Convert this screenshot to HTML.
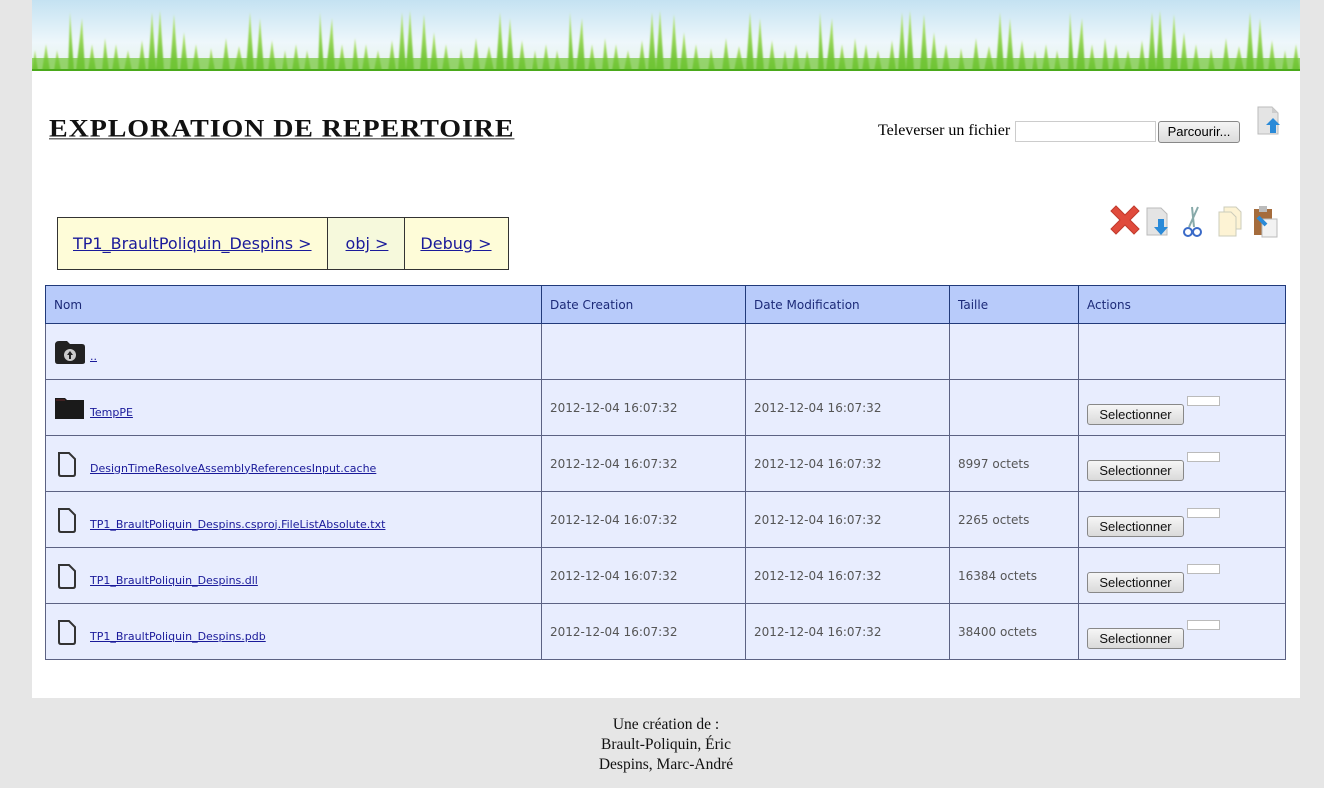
<!DOCTYPE html>
<html><head><meta charset="utf-8"><style>
body{margin:0;background:#e6e6e6;width:1324px;height:788px;overflow:hidden;font-family:"Liberation Serif",serif}
#wrap{position:absolute;left:32px;top:0;width:1268px;height:698px;background:#fff}
#banner{position:absolute;left:0;top:0;width:1268px;height:71px}
h1{position:absolute;left:17px;top:115px;margin:0;font-family:"Liberation Serif",serif;font-weight:bold;font-size:28px;letter-spacing:0.9px;transform:scaleY(0.9);transform-origin:left top;text-decoration:underline;text-decoration-thickness:1px;text-underline-offset:2px;color:#111}
.up{position:absolute;left:846px;top:122px;font-size:16px}
.up input{position:absolute;left:137px;top:-1px;width:141px;height:21px;border:1px solid #ccc;box-sizing:border-box}
.up .b{position:absolute;left:280px;top:-1px;width:82px;height:22px;border:1px solid #888;border-radius:3px;background:linear-gradient(#f4f4f4,#dcdcdc);font-family:"Liberation Sans",sans-serif;font-size:13px;text-align:center;line-height:20px;box-sizing:border-box}
.bc{position:absolute;left:25px;top:217px;height:51px;border:1px solid #333;display:flex;font-family:"DejaVu Sans",sans-serif;font-size:16px}
.bc div{background:#fefcd8;border-right:1px solid #333;padding:0 15px;line-height:52px}
.bc div:last-child{border-right:0;padding-right:16px}
.bc a{color:#1a1a9a;text-decoration:underline}
table{position:absolute;left:13px;top:285px;border-collapse:collapse;font-family:"DejaVu Sans",sans-serif;font-size:12px;color:#555}
th{background:#b8cbfa;color:#1c2a78;font-weight:normal;text-align:left;height:37px;padding:0 8px;border:1px solid #213a7a}
td{background:#e8edfe;border:1px solid #5c6283;height:55px;padding:0 8px;vertical-align:middle}
td a{color:#1a1a9a;font-size:11px;text-decoration:underline;margin-left:4px}
.btn{display:inline-block;margin-top:14px;width:95px;height:19px;border:1px solid #888;border-radius:3px;background:linear-gradient(#f6f6f6,#dadada);font-family:"Liberation Sans",sans-serif;font-size:13px;color:#111;text-align:center;line-height:19px;vertical-align:top}
.sm{display:inline-block;width:31px;height:8px;border:1px solid #bbb;background:#fff;margin-left:3px;vertical-align:top;margin-top:6px}
.foot{position:absolute;top:715px;left:0;width:1332px;text-align:center;font-size:15.5px;line-height:20px;color:#111}
</style></head><body>
<div id="wrap">
<svg id="banner" width="1268" height="71">
<defs>
<linearGradient id="sky" x1="0" y1="0" x2="0" y2="1"><stop offset="0" stop-color="#c4e2f2"/><stop offset="0.6" stop-color="#eef7fb"/><stop offset="1" stop-color="#e4f2e6"/></linearGradient>
<linearGradient id="gr" x1="0" y1="0" x2="0" y2="1"><stop offset="0" stop-color="#bde77a"/><stop offset="1" stop-color="#62bd2a"/></linearGradient>
<filter id="bl"><feGaussianBlur stdDeviation="0.8"/></filter>
<pattern id="p" width="250" height="71" patternUnits="userSpaceOnUse">
<g fill="url(#gr)" filter="url(#bl)">
<polygon points="0,71 3,50 6,71"/><polygon points="10,71 14,44 18,71"/><polygon points="22,71 25,50 29,71"/>
<polygon points="36,71 38,12 42,71"/><polygon points="44,71 50,18 53,71"/><polygon points="56,71 60,44 64,71"/>
<polygon points="70,71 73,38 77,71"/><polygon points="80,71 84,44 88,71"/><polygon points="92,71 96,50 100,71"/>
<polygon points="106,71 110,40 114,71"/><polygon points="116,71 120,12 124,71"/><polygon points="124,71 128,10 132,71"/>
<polygon points="138,71 142,14 146,71"/><polygon points="148,71 152,32 156,71"/><polygon points="160,71 164,44 168,71"/>
<polygon points="176,71 179,48 183,71"/><polygon points="190,71 194,38 198,71"/><polygon points="202,71 207,46 212,71"/>
<polygon points="214,71 218,12 222,71"/><polygon points="224,71 228,18 232,71"/><polygon points="236,71 240,40 244,71"/>
</g>
<rect y="58" width="250" height="13" fill="#72c636" opacity="0.7"/>
</pattern>
</defs>
<rect width="1268" height="71" fill="url(#sky)"/>
<rect width="1268" height="71" fill="url(#p)"/>
<rect y="69" width="1268" height="2" fill="#4aa91a"/>
</svg>
<h1>EXPLORATION DE REPERTOIRE</h1>
<div class="up">Televerser un fichier<input><span class="b">Parcourir...</span></div>
<svg style="position:absolute;left:1224px;top:106px" width="26" height="30"><path d="M2 1h14l6 6v21H2z" fill="#e4e4e4" stroke="#bbb"/><path d="M16 1v6h6" fill="#ccc"/><path d="M17 12l7 7h-4v8h-6v-8h-4z" fill="#2a8ad8"/></svg>
<svg style="position:absolute;left:1076px;top:205px" width="180" height="34">
<path d="M3 6l5-5 9 9 9-9 5 5-9 9 9 9-5 5-9-9-9 9-5-5 9-9z" fill="#e04b3c" stroke="#c0392b"/>
<path d="M39 3h14l6 6v21H39z" fill="#e4e4e4" stroke="#bbb"/><path d="M50 14h6v8h4l-7 8-7-8h4z" fill="#2a8ad8"/>
<path d="M90 2l-9 20M84 2l2 20" stroke="#8aa" stroke-width="2"/><circle cx="80" cy="27" r="4" fill="none" stroke="#3a6ac8" stroke-width="2"/><circle cx="89" cy="27" r="4" fill="none" stroke="#3a6ac8" stroke-width="2"/>
<path d="M116 2h12l5 5v17h-17z" fill="#fdf3d4" stroke="#ccb"/><path d="M111 7h12l5 5v19h-17z" fill="#fdf3d4" stroke="#ccb"/>
<rect x="146" y="4" width="18" height="26" fill="#a56c3c"/><rect x="151" y="1" width="8" height="6" fill="#bbb"/><rect x="154" y="14" width="15" height="18" fill="#f2f2f2" stroke="#bbb"/><path d="M150 12l8 8" stroke="#2a8ad8" stroke-width="4"/>
</svg>
<div class="bc"><div><a>TP1_BraultPoliquin_Despins &gt;</a></div><div style="background:#f6f9dc;padding:0 16px 0 18px"><a>obj &gt;</a></div><div><a>Debug &gt;</a></div></div>
<table>
<tr><th style="width:479px">Nom</th><th style="width:187px">Date Creation</th><th style="width:187px">Date Modification</th><th style="width:112px">Taille</th><th style="width:190px">Actions</th></tr>
<tr><td><svg width="32" height="26" style="vertical-align:top"><path d="M1 6q0-4 4-4h8l3 3h12q3 0 3 3v15q0 2-3 2H4q-3 0-3-3z" fill="#222"/><circle cx="16" cy="16" r="6" fill="#ccc"/><path d="M16 12l-3 4h2v4h2v-4h2z" fill="#222"/></svg><a style="position:relative;top:10px">..</a></td><td></td><td></td><td></td><td></td></tr>
<tr><td><svg width="32" height="26" style="vertical-align:top"><path d="M1 3h10l2 2h17v19H1z" fill="#1a1a1a"/><path d="M2 5h9" stroke="#6b2a2a"/></svg><a style="position:relative;top:10px">TempPE</a></td><td>2012-12-04 16:07:32</td><td>2012-12-04 16:07:32</td><td></td><td><span class="btn">Selectionner</span><span class="sm"></span></td></tr>
<tr><td><svg width="32" height="26" style="vertical-align:top"><path d="M5 2h10l6 6v15q0 2-2 2H7q-2 0-2-2z" fill="none" stroke="#333" stroke-width="2"/></svg><a style="position:relative;top:10px">DesignTimeResolveAssemblyReferencesInput.cache</a></td><td>2012-12-04 16:07:32</td><td>2012-12-04 16:07:32</td><td>8997 octets</td><td><span class="btn">Selectionner</span><span class="sm"></span></td></tr>
<tr><td><svg width="32" height="26" style="vertical-align:top"><path d="M5 2h10l6 6v15q0 2-2 2H7q-2 0-2-2z" fill="none" stroke="#333" stroke-width="2"/></svg><a style="position:relative;top:10px">TP1_BraultPoliquin_Despins.csproj.FileListAbsolute.txt</a></td><td>2012-12-04 16:07:32</td><td>2012-12-04 16:07:32</td><td>2265 octets</td><td><span class="btn">Selectionner</span><span class="sm"></span></td></tr>
<tr><td><svg width="32" height="26" style="vertical-align:top"><path d="M5 2h10l6 6v15q0 2-2 2H7q-2 0-2-2z" fill="none" stroke="#333" stroke-width="2"/></svg><a style="position:relative;top:10px">TP1_BraultPoliquin_Despins.dll</a></td><td>2012-12-04 16:07:32</td><td>2012-12-04 16:07:32</td><td>16384 octets</td><td><span class="btn">Selectionner</span><span class="sm"></span></td></tr>
<tr><td><svg width="32" height="26" style="vertical-align:top"><path d="M5 2h10l6 6v15q0 2-2 2H7q-2 0-2-2z" fill="none" stroke="#333" stroke-width="2"/></svg><a style="position:relative;top:10px">TP1_BraultPoliquin_Despins.pdb</a></td><td>2012-12-04 16:07:32</td><td>2012-12-04 16:07:32</td><td>38400 octets</td><td><span class="btn">Selectionner</span><span class="sm"></span></td></tr>
</table>
</div>
<div class="foot">Une création de :<br>Brault-Poliquin, Éric<br>Despins, Marc-André</div>
</body></html>
